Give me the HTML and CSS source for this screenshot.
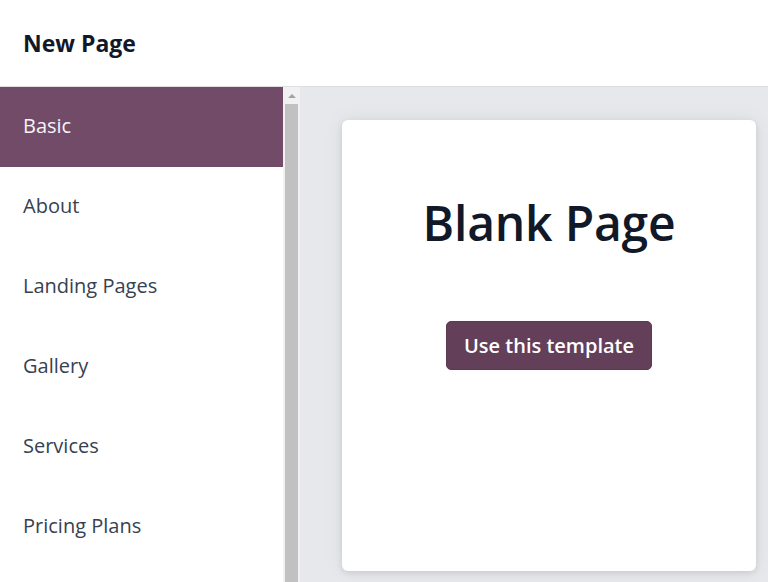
FILE: index.html
```html
<!DOCTYPE html>
<html lang="en">
<head>
<meta charset="utf-8">
<title>New Page</title>
<link rel="stylesheet" href="styles.css">
</head>
<body>
<div class="dialog">
  <header class="dialog-header">
    <h4 class="dialog-title">New Page</h4>
  </header>
  <div class="dialog-body">
    <aside class="sidebar">
      <nav class="nav">
        <a class="nav-item active">Basic</a>
        <a class="nav-item">About</a>
        <a class="nav-item">Landing Pages</a>
        <a class="nav-item">Gallery</a>
        <a class="nav-item">Services</a>
        <a class="nav-item">Pricing Plans</a>
      </nav>
      <div class="scrollbar">
        <div class="scroll-arrow"></div>
        <div class="scroll-thumb"></div>
      </div>
    </aside>
    <main class="content">
      <section class="template-card">
        <h1 class="template-title">Blank Page</h1>
        <button class="btn-primary" type="button">Use this template</button>
      </section>
    </main>
  </div>
</div>
</body>
</html>
```

FILE: styles.css
```css
* { box-sizing: border-box; }

html, body {
  margin: 0;
  padding: 0;
  height: 100%;
  overflow: hidden;
}

body {
  font-family: "Open Sans", "Noto Sans", "DejaVu Sans", sans-serif;
  background: #ffffff;
  color: #374151;
}

.dialog {
  display: flex;
  flex-direction: column;
  height: 582px;
}

.dialog-header {
  height: 87px;
  flex: none;
  display: flex;
  align-items: center;
  padding: 0 23px;
  border-bottom: 1px solid #dcdee2;
}

.dialog-title {
  margin: 0;
  font-size: 23px;
  font-weight: 700;
  color: #111827;
  letter-spacing: 0;
  padding-bottom: 1px;
}

.dialog-body {
  flex: 1;
  display: flex;
  min-height: 0;
}

.sidebar {
  width: 300px;
  flex: none;
  display: flex;
  background: #ffffff;
}

.nav {
  width: 283px;
  display: flex;
  flex-direction: column;
}

.nav-item {
  height: 80px;
  flex: none;
  display: flex;
  align-items: center;
  padding: 0 23px 3px;
  font-size: 20px;
  color: #374151;
  cursor: pointer;
}

.nav-item.active {
  background: #714b67;
  color: #f7f3f6;
}

.scrollbar {
  width: 17px;
  flex: none;
  background: #f1f1f1;
  display: flex;
  flex-direction: column;
  align-items: center;
  padding: 0 2px;
}

.scroll-arrow {
  width: 0;
  height: 0;
  margin-top: 7px;
  border-left: 4px solid transparent;
  border-right: 4px solid transparent;
  border-bottom: 4px solid #a3a3a3;
}

.scroll-thumb {
  margin-top: 6px;
  width: 100%;
  flex: 1;
  background: #c1c1c1;
}

.content {
  flex: 1;
  background: #e7e8ec;
  padding: 33px 12px 11px 42px;
  display: flex;
}

.template-card {
  flex: 1;
  background: #ffffff;
  border-radius: 6px;
  box-shadow: 0 2px 6px rgba(0, 0, 0, 0.10), 0 0 22px rgba(0, 0, 0, 0.06);
  display: flex;
  flex-direction: column;
  align-items: center;
  padding-top: 73px;
}

.template-title {
  margin: 0;
  font-size: 48px;
  font-weight: 600;
  color: #111827;
  line-height: 60px;
  letter-spacing: -0.2px;
}

.btn-primary {
  margin-top: 68px;
  height: 49px;
  padding: 0 17px;
  border: 1px solid #5c3a53;
  border-radius: 5px;
  background: #643f5a;
  color: #ffffff;
  font-family: inherit;
  font-size: 20px;
  font-weight: 600;
  cursor: pointer;
}
```
